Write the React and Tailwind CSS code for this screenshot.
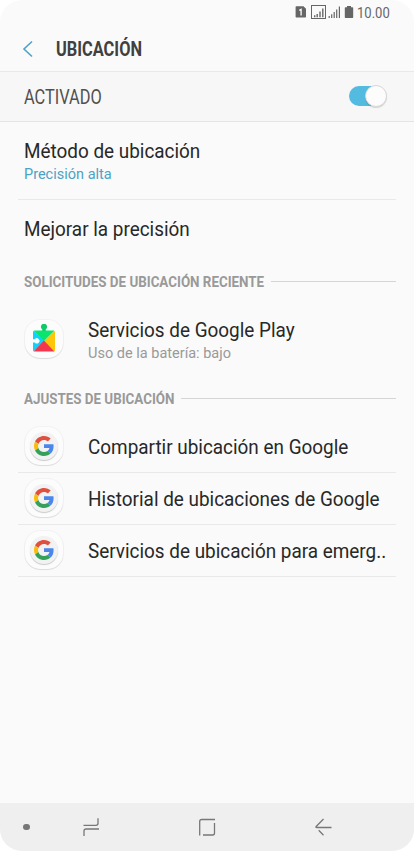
const googleSettings = [
  'Compartir ubicación en Google',
  'Historial de ubicaciones de Google',
  'Servicios de ubicación para emerg..',
];

function StatusBar() {
  return (
    <div className="flex h-6 shrink-0 items-center justify-end pr-6 text-[#666]">
      <svg width="60" height="16" viewBox="0 0 60 16" fill="none">
        <path d="M1.600 3q0-.7.700-.7h7.200L12 4.800v8q0 .7-.7.7h-9q-.7 0-.7-.7z" fill="currentColor" />
        <path d="M5.300 6.300l1.800-.9v6" stroke="#fff" strokeWidth="1.300" />
        <rect x="17.500" y="1.500" width="14" height="13" stroke="currentColor" strokeWidth="1" />
        <path d="M20.700 13.200v-2M23.200 13.200V10M26 13.200V7.500M28.800 13.200V4.500" stroke="currentColor" strokeWidth="1.400" />
        <path d="M35.200 14v-2M37.700 14v-3.800M40.200 14V8M42.700 14V5.500M45.400 14V2.500" stroke="currentColor" strokeWidth="1.200" />
        <path d="M50.800 4q0-.7.700-.7h1.500V2h4v1.300h1.500q.7 0 .7.700v9.300q0 .7-.7.700h-7q-.7 0-.7-.7z" fill="currentColor" />
      </svg>
      <span className="ml-[3px] inline-block w-[33px] pt-0.5 text-[15px] leading-6 whitespace-nowrap">
        <span className="inline-block origin-left scale-x-[0.87]">10.00</span>
      </span>
    </div>
  );
}

function Switch() {
  return (
    <div className="relative mb-px h-[20px] w-[37px] rounded-full bg-[#54bbe0]">
      <div className="absolute -top-px -right-px h-[22px] w-[22px] rounded-full border border-[#d8d8d8] bg-[#fcfcfc] shadow-[0_1px_1px_rgba(0,0,0,0.15)]" />
    </div>
  );
}

function SectionTitle({ children, width }) {
  return (
    <div className="flex h-5 items-center pr-[18px] pl-6">
      <h2 className={`${width} shrink-0 pt-0.5 text-[15.5px] font-bold whitespace-nowrap text-[#999]`}>
        <span className="inline-block origin-left scale-x-[0.862]">{children}</span>
      </h2>
      <div className="mb-0.5 h-px flex-1 bg-[#d5d5d5]" />
    </div>
  );
}

function ItemLabel({ children }) {
  return (
    <p className="origin-left scale-x-[0.945] self-start text-[20px] leading-6 whitespace-nowrap">{children}</p>
  );
}

function ItemHint({ children, color }) {
  return (
    <p className={`origin-left scale-x-[0.967] self-start text-[15px] leading-[22px] whitespace-nowrap ${color}`}>
      {children}
    </p>
  );
}

function AppIcon({ children }) {
  return (
    <div className="mb-px flex h-[38px] w-[38px] shrink-0 items-center justify-center rounded-[15px] bg-[#fcfcfc] shadow-[0_0_0_1px_rgba(0,0,0,0.03),0_1px_1px_rgba(0,0,0,0.09)]">
      {children}
    </div>
  );
}

function PlayServicesIcon() {
  return (
    <svg className="mb-0.5" width="22" height="28" viewBox="0 0 22 28">
      <clipPath id="piece">
        <rect y="6.500" width="22" height="21" rx="1.500" />
      </clipPath>
      <g clipPath="url(#piece)">
        <path d="M0 6v22l12-11z" fill="#10d2fb" />
        <path d="M22 6v22L11 17z" fill="#fcc60b" />
        <path d="M0 28h22L11 16.500z" fill="#f4374d" />
        <path d="M0 6h22L11 17z" fill="#0ae56f" />
      </g>
      <path d="M9.300 7V5.400a3.100 3.100 0 1 1 3.400 0V7z" fill="#0ecb68" />
      <path d="M0 15.200h1.800a2.600 2.600 0 1 1 0 3.200H0z" fill="#fdfdfd" />
    </svg>
  );
}

function GoogleIcon() {
  return (
    <div className="flex h-[28px] w-[28px] items-center justify-center rounded-full bg-[#f2f2f2] shadow-[0_1px_1px_rgba(0,0,0,0.2)]">
      <svg width="20" height="20" viewBox="0 0 48 48">
        <path fill="#E0503F" d="M24 9.500c3.540 0 6.710 1.220 9.210 3.600l6.850-6.850C35.900 2.380 30.470 0 24 0 14.620 0 6.510 5.380 2.560 13.220l7.980 6.190C12.430 13.720 17.740 9.500 24 9.500z" />
        <path fill="#4A86EC" d="M46.980 24.550c0-1.570-.15-3.090-.38-4.550H24v9.020h12.940c-.58 2.960-2.260 5.480-4.780 7.180l7.730 6c4.510-4.180 7.090-10.360 7.090-17.650z" />
        <path fill="#FBBC05" d="M10.530 28.590c-.48-1.450-.76-2.990-.76-4.590s.27-3.140.76-4.590l-7.980-6.190C.92 16.460 0 20.120 0 24c0 3.880.92 7.540 2.560 10.780l7.970-6.190z" />
        <path fill="#34A15A" d="M24 48c6.480 0 11.930-2.130 15.890-5.810l-7.730-6c-2.150 1.450-4.920 2.300-8.160 2.300-6.260 0-11.570-4.220-13.470-9.910l-7.980 6.190C6.510 42.620 14.620 48 24 48z" />
      </svg>
    </div>
  );
}

function NavBar() {
  return (
    <nav className="flex h-12 shrink-0 items-center bg-[#efefef] text-[#777]">
      <div className="ml-[23px] h-1.5 w-[7px] rounded-full bg-[#777]" />
      <svg className="ml-[52px]" width="18" height="20" viewBox="0 0 18 20" fill="none" stroke="currentColor" strokeWidth="1.300">
        <path d="M1.500 8.300H14q2 0 2-2V1.300M17 12H4q-2 0-2 2v5" />
      </svg>
      <svg className="ml-[98px]" width="18" height="20" viewBox="0 0 18 20" fill="none" stroke="currentColor" strokeWidth="1.300">
        <path d="M1.700 18.500V4.500q0-2 2-2H17M16.500 6V16q0 2-1.800 2H5" />
      </svg>
      <svg className="ml-[98px]" width="18" height="20" viewBox="0 0 18 20" fill="none" stroke="currentColor" strokeWidth="1.300">
        <path d="M9.500 2L2.200 9.500q-.8 1 .5 1H17.500M4.700 13.300l4.800 5" />
      </svg>
    </nav>
  );
}

export default function App() {
  return (
    <div className="h-[851px] w-[414px] bg-white">
      <div className="flex h-full flex-col overflow-hidden rounded-[22px] bg-[#fafafa] font-[Roboto,sans-serif] text-[#282828]">
        <StatusBar />

        {/* Header */}
        <header className="flex h-12 shrink-0 items-center border-b border-[#e9e9e9] pt-0.5 pl-[22px]">
          <svg width="12" height="18" viewBox="0 0 12 18" fill="none" stroke="#4fa3c7" strokeWidth="1.600">
            <path d="M10 1.500L2 9l8 7.500" />
          </svg>
          <h1 className="ml-[22px] pt-0.5 text-[19.5px] font-bold text-[#404040]">
            <span className="inline-block origin-left scale-x-[0.84]">UBICACIÓN</span>
          </h1>
        </header>

        <div className="flex h-[50px] shrink-0 items-center justify-between border-b border-[#e4e4e4] bg-[#f7f7f7] pr-7 pl-6">
          <span className="inline-block origin-left scale-x-[0.84] pt-[3px] text-[19.5px] text-[#505050]">ACTIVADO</span>
          <Switch />
        </div>

        <main className="flex flex-1 flex-col">
          <div className="mx-[18px] flex h-[78px] flex-col border-b border-[#e9e9e9] px-1.5 pt-[17px]">
            <ItemLabel>Método de ubicación</ItemLabel>
            <ItemHint color="text-[#4aa3c3]">Precisión alta</ItemHint>
          </div>
          <div className="flex h-[60px] flex-col px-6 pt-[17px]">
            <ItemLabel>Mejorar la precisión</ItemLabel>
          </div>

          <div className="mt-3">
            <SectionTitle width="w-[247px]">SOLICITUDES DE UBICACIÓN RECIENTE</SectionTitle>
          </div>
          <div className="flex h-[97px] items-center px-[25px]">
            <div className="mb-[3px]">
              <AppIcon>
                <PlayServicesIcon />
              </AppIcon>
            </div>
            <div className="ml-[25px] flex flex-col">
              <ItemLabel>Servicios de Google Play</ItemLabel>
              <ItemHint color="text-[#999]">Uso de la batería: bajo</ItemHint>
            </div>
          </div>

          <SectionTitle width="w-[157px]">AJUSTES DE UBICACIÓN</SectionTitle>
          <ul className="mx-[18px] mt-3">
            {googleSettings.map((label) => (
              <li key={label} className="flex h-[52px] items-center border-b border-[#e9e9e9] pl-[7px]">
                <AppIcon>
                  <GoogleIcon />
                </AppIcon>
                <div className="ml-[25px] flex pt-px">
                  <ItemLabel>{label}</ItemLabel>
                </div>
              </li>
            ))}
          </ul>
        </main>

        <NavBar />
      </div>
    </div>
  );
}
